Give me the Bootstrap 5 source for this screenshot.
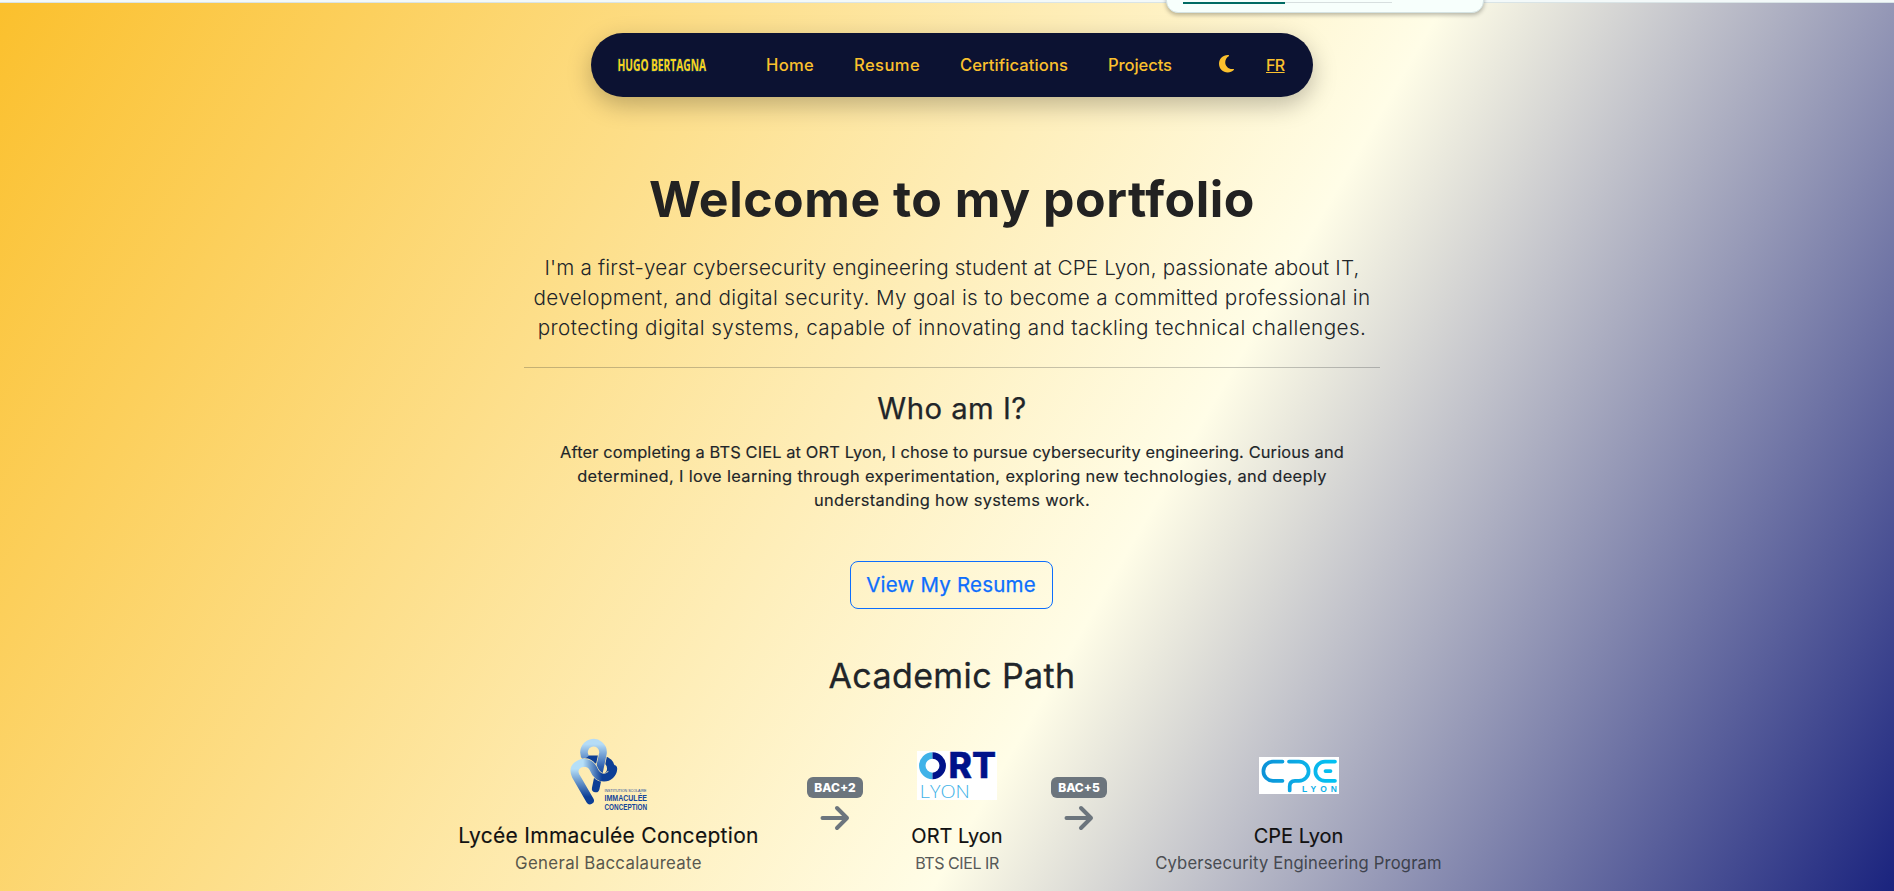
<!DOCTYPE html>
<html lang="en">
<head>
<meta charset="utf-8">
<meta name="viewport" content="width=device-width, initial-scale=1">
<title>Hugo Bertagna</title>
<link href="https://cdn.jsdelivr.net/npm/bootstrap@5.3.0/dist/css/bootstrap.min.css" rel="stylesheet">
<style>
body{font-family:Inter,"Open Sans",sans-serif;color:#212529;background:#f5fafa;height:100vh;overflow:hidden}
svg{overflow:visible}
.topline{height:3px;background:#f3f9f9;border-bottom:1px solid #d9e4e6}
.page{height:calc(100vh - 3px);background:linear-gradient(120deg,#fbc02d 0%,#fffde7 60%,#1a237e 100%);padding:30px 0 0 10px}
.toast-edge{left:1166px;top:-20px;width:318px;height:33px;background:#f7fffc;border:1px solid #d5e3e3;border-radius:0 0 12px 12px;box-shadow:0 2px 4px rgba(0,0,0,.28)}
.track{margin:21px 91px 0 16px;height:1px;background:#d7dfdf}
.track div{width:102px;height:2px;background:#006b63}
.pill{width:722px;height:64px;border-radius:32px;background:#0c1232;box-shadow:0 8px 24px rgba(0,0,0,.25);padding:0 0 1px 25px}
.pill a{color:#fbc02d;font-size:16.6px;font-weight:500;line-height:24px;white-space:nowrap;text-decoration:none}
h1.hero{font-size:50px;font-weight:700;line-height:58px;letter-spacing:.5px;margin:73px 0 25px;color:#222}
.intro{font-size:20.7px;font-weight:300;line-height:30px}
.ln{display:block;white-space:nowrap}
.inner{width:856px}
hr{margin:24px 0 24px;border-color:#212529;opacity:.25}
h2.who{font-size:29.3px;font-weight:400;line-height:34px;margin:0 0 14px;letter-spacing:.46px;-webkit-text-stroke:.25px}
.bio{font-size:16.4px;line-height:24px;margin-bottom:49px;-webkit-text-stroke:.15px}
.btn-cv{width:203px;height:48px;font-size:20.5px;line-height:30px;letter-spacing:.2px;padding:8px 0;margin-right:2px;border-radius:8px;color:#0d6efd;border-color:#0d6efd;-webkit-text-stroke:.25px}
h2.path{font-size:34px;font-weight:400;line-height:38px;letter-spacing:.4px;margin:48px 0 40px;-webkit-text-stroke:.3px}
.logo-box{height:80px}
.step{white-space:nowrap}
.step h5{font-size:20px;font-weight:400;line-height:24px;margin:9px 0 3px;color:#111;-webkit-text-stroke:.15px}
.step p{line-height:24px;color:rgba(33,37,41,.75);margin:0;-webkit-text-stroke:.1px}
.hop{width:56px;margin:42px 48px 0}
.tagx{height:21px;border-radius:6px;background:#6c757d;color:#fff;font-size:12px;font-weight:800;line-height:21px;width:56px}
</style>
</head>
<body>
<div class="topline"></div>
<div class="toast-edge position-absolute"><div class="track"><div></div></div></div>
<main class="page">
  <nav class="pill d-flex align-items-center mx-auto">
    <svg width="92" height="30" viewBox="0 0 92 30" font-family="Open Sans" font-weight="700" fill="#f8d21c" stroke="#15506b" stroke-width="1" paint-order="stroke">
      <text x="1.500" y="21" font-size="16" textLength="31" lengthAdjust="spacingAndGlyphs">HUGO</text>
      <text x="35" y="21" font-size="16" textLength="55" lengthAdjust="spacingAndGlyphs">BERTAGNA</text>
    </svg>
    <a href="#" style="margin-left:58px;width:88px;letter-spacing:.3px">Home</a>
    <a href="#" style="width:106px;letter-spacing:.4px">Resume</a>
    <a href="#" style="width:148px;letter-spacing:.08px">Certifications</a>
    <a href="#" style="width:111px;letter-spacing:-.1px">Projects</a>
    <svg width="15" height="17.500" viewBox="0 32 384 448" preserveAspectRatio="none" fill="#fbc02d" style="margin:-2px 32px 0 0"><path d="M223.500 32C100 32 0 132.300 0 256S100 480 223.500 480c60.600 0 115.500-24.200 155.800-63.400c5-4.900 6.300-12.500 3.100-18.700s-10.100-9.700-17-8.500c-9.800 1.700-19.800 2.600-30.100 2.600c-96.900 0-175.500-78.800-175.500-176c0-65.800 36-123.100 89.300-153.300c6.100-3.500 9.200-10.500 7.700-17.300s-7.300-11.900-14.300-12.500c-6.300-.5-12.600-.8-19-.8z"/></svg>
    <a href="#" class="text-decoration-underline" style="font-size:16px;letter-spacing:-.6px">FR</a>
  </nav>

  <div class="inner mx-auto text-center">
    <h1 class="hero text-nowrap">Welcome to my portfolio</h1>
    <div class="intro">
      <span class="ln" style="letter-spacing:.155px">I'm a first-year cybersecurity engineering student at CPE Lyon, passionate about IT,</span>
      <span class="ln" style="letter-spacing:.38px">development, and digital security. My goal is to become a committed professional in</span>
      <span class="ln" style="letter-spacing:.41px">protecting digital systems, capable of innovating and tackling technical challenges.</span>
    </div>
    <hr>
    <h2 class="who">Who am I?</h2>
    <div class="bio">
      <span class="ln" style="letter-spacing:.13px">After completing a BTS CIEL at ORT Lyon, I chose to pursue cybersecurity engineering. Curious and</span>
      <span class="ln" style="letter-spacing:.345px">determined, I love learning through experimentation, exploring new technologies, and deeply</span>
      <span class="ln" style="letter-spacing:.33px">understanding how systems work.</span>
    </div>
    <a href="#" class="btn btn-outline-primary btn-cv">View My Resume</a>
    <h2 class="path">Academic Path</h2>
  </div>

  <div class="d-flex justify-content-center text-center pe-1">
    <div class="step" style="width:301px">
      <div class="logo-box d-flex justify-content-center align-items-center">
        <svg width="80" height="80" viewBox="0 0 80 80">
          <defs>
            <linearGradient id="ga" x1="0" y1="3" x2="0" y2="44" gradientUnits="userSpaceOnUse"><stop offset="0.150" stop-color="#b5dcf6"/><stop offset=".7" stop-color="#2e60b0"/><stop offset="1" stop-color="#0d3f96"/></linearGradient>
            <linearGradient id="gb" x1="0" y1="26" x2="0" y2="66" gradientUnits="userSpaceOnUse"><stop offset=".2" stop-color="#b5dff8"/><stop offset=".9" stop-color="#0d3f96"/></linearGradient>
            <linearGradient id="gc" x1="14" y1="0" x2="33" y2="0" gradientUnits="userSpaceOnUse"><stop offset="0" stop-color="#b5dff8"/><stop offset="1" stop-color="#0d3f96"/></linearGradient>
          </defs>
          <g fill="none" stroke-linecap="round" stroke-linejoin="round">
            <path d="M18 24.500H34A9.300 9.300 0 0 1 35 42.700" stroke="#0d3f96" stroke-width="7.800"/>
            <path d="M29 42L34 18" stroke="#fdebb5" stroke-width="9" stroke-linecap="butt"/>
            <path d="M26.700 53.500L29.500 40" stroke="#0d3f96" stroke-width="7.600"/>
            <path d="M29 42L34 18A9.500 9.500 0 1 0 17 23" stroke="url(#ga)" stroke-width="7.600" stroke-linecap="butt"/>
            <path d="M9 29.500Q19 25 24 33Q28 42.700 35 42.700A9.400 9.400 0 0 0 43 38" stroke="#fdebb5" stroke-width="9" stroke-linecap="butt"/>
            <path d="M21 65.500L6.800 41Q3 33 10 29.200Q12 28 14.500 28" stroke="url(#gb)" stroke-width="7.800"/>
            <path d="M14 28Q20.500 27.500 24 33Q28 42.700 35 42.700A9.400 9.400 0 0 0 44.300 34" stroke="url(#gc)" stroke-width="7.800"/>
          </g>
          <g font-family="Liberation Sans" fill="#14459a" font-weight="700">
            <text x="35.500" y="57" font-size="3.600" font-weight="400" textLength="42" lengthAdjust="spacingAndGlyphs">INSTITUTION SCOLAIRE</text>
            <text x="35.500" y="66" font-size="8.600" textLength="42.500" lengthAdjust="spacingAndGlyphs">IMMACULÉE</text>
            <text x="35.500" y="75" font-size="8.600" textLength="42.500" lengthAdjust="spacingAndGlyphs">CONCEPTION</text>
          </g>
        </svg>
      </div>
      <h5 style="font-size:21px;letter-spacing:.3px">Lycée Immaculée Conception</h5>
      <p style="font-size:16.800px;letter-spacing:.34px">General Baccalaureate</p>
    </div>
    <div class="hop">
      <div class="tagx">BAC+2</div>
      <svg class="d-block mx-auto" style="margin-top:6px" width="30" height="28" viewBox="0 0 30 28" fill="none" stroke="#6c757d" stroke-width="4" stroke-linecap="round" stroke-linejoin="round"><path d="M2.500 14H27M17 4L27 14L17 24"/></svg>
    </div>
    <div class="step" style="width:92px">
      <div class="logo-box d-flex justify-content-center align-items-center">
        <svg width="80" height="49" viewBox="0 0 80 49">
          <path fill="#fff" d="M0 0h80v49H0z"/>
          <g fill="none" stroke-width="6.500">
            <path d="M15.500 4.500A10.200 10.200 0 0 0 15.500 24.900" stroke="#3fb2e8"/>
            <path d="M15.500 4.500A10.200 10.200 0 0 1 15.500 24.900" stroke="#00128a"/>
          </g>
          <g fill="#00128a" stroke="#00128a" stroke-width=".4" font-family="Inter" font-size="35" font-weight="800">
            <text x="31.500" y="27" textLength="47.500" lengthAdjust="spacingAndGlyphs">RT</text>
          </g>
          <text x="2.800" y="46.500" font-family="Open Sans" font-size="19" font-weight="300" fill="#3fb2e8" textLength="50" lengthAdjust="spacingAndGlyphs">LYON</text>
        </svg>
      </div>
      <h5>ORT Lyon</h5>
      <p style="letter-spacing:-.44px">BTS CIEL IR</p>
    </div>
    <div class="hop">
      <div class="tagx">BAC+5</div>
      <svg class="d-block mx-auto" style="margin-top:6px" width="30" height="28" viewBox="0 0 30 28" fill="none" stroke="#6c757d" stroke-width="4" stroke-linecap="round" stroke-linejoin="round"><path d="M2.500 14H27M17 4L27 14L17 24"/></svg>
    </div>
    <div class="step" style="width:287px">
      <div class="logo-box d-flex justify-content-center align-items-center">
        <svg width="80" height="37" viewBox="0 0 80 37">
          <defs><linearGradient id="gd" x1="0" y1="0" x2="80" y2="0" gradientUnits="userSpaceOnUse"><stop offset="0" stop-color="#0c8fd6"/><stop offset=".65" stop-color="#0bb4ea"/><stop offset="1" stop-color="#00c4f5"/></linearGradient></defs>
          <path fill="#fff" d="M0 0h80v37H0z"/>
          <g fill="none" stroke="url(#gd)" stroke-width="3.700" stroke-linecap="round">
            <path d="M23.500 4.600H14A9.600 9.600 0 0 0 14 23.800H23.500"/>
            <path d="M30 4.600H40A9.600 9.600 0 0 1 40 23.800H36Q30.700 24 30.700 29V33.500"/>
            <path d="M76 4.600H66A9.600 9.600 0 0 0 66 23.800H76"/>
          </g>
          <path d="M66.500 14.100H71.500" stroke="#05bdf0" stroke-width="3.700" stroke-linecap="round"/>
          <text x="43" y="35" font-family="Liberation Sans" font-weight="700" font-size="8.500" fill="#0fb0e8" textLength="35" lengthAdjust="spacing">LYON</text>
        </svg>
      </div>
      <h5>CPE Lyon</h5>
      <p style="font-size:16.600px;letter-spacing:.18px">Cybersecurity Engineering Program</p>
    </div>
  </div>
</main>
<script src="https://cdn.jsdelivr.net/npm/bootstrap@5.3.0/dist/js/bootstrap.bundle.min.js"></script>
</body>
</html>
